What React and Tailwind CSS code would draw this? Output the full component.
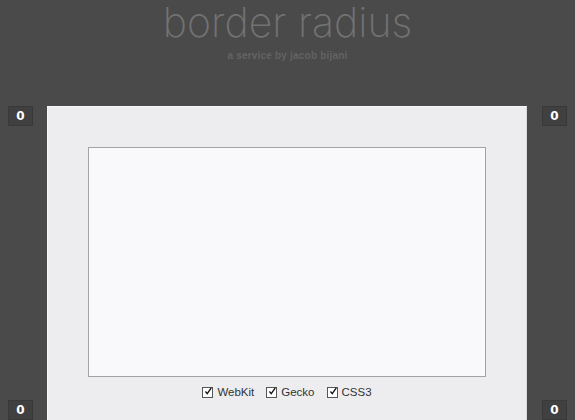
import React from 'react';

const Badge = () => (
  <div className="w-[25px] h-[20px] bg-[#404040] border border-[#393939] flex items-center justify-center text-white text-[12px] font-bold leading-none font-['DejaVu_Sans',sans-serif]">
    0
  </div>
);

const Check = ({ label }) => (
  <label className="flex items-center gap-[4px]">
    <span className="w-[11px] h-[11px] border border-[#555] bg-white flex items-center justify-center">
      <svg viewBox="0 0 11 11" className="w-[11px] h-[11px] -mt-[2px] ml-[1px]">
        <path d="M2 5.5 L4.5 8.5 L10 0.5" fill="none" stroke="#111" strokeWidth="1.8" />
      </svg>
    </span>
    <span>{label}</span>
  </label>
);

export default function App() {
  return (
    <div className="w-[575px] h-[420px] overflow-hidden bg-[#4a4a4a] font-['DejaVu_Sans',sans-serif]">
      {/* Header */}
      <div className="h-[106px] pt-[2px] flex flex-col items-center">
        <h1 className="text-[41px] leading-[40px] font-extralight text-[#727272] font-['Inter',sans-serif]">
          border radius
        </h1>
        <p className="mt-[6px] text-[10px] font-bold text-[#636363] tracking-[0.2px] font-['Liberation_Sans',sans-serif]">a service by jacob bijani</p>
      </div>

      {/* Main row */}
      <div className="flex items-start px-[8px]">
        <div className="h-[314px] flex flex-col justify-between">
          <Badge />
          <Badge />
        </div>

        <div className="ml-[14px] w-[480px] h-[330px] bg-[#ededf0] border border-[#f7f7f8] border-r-[#d8d8dc] p-[40px]">
          <div className="w-[398px] h-[230px] bg-[#f9f9fb] border border-[#a3a3a3]"></div>
          <div className="mt-[7px] flex justify-center gap-[12px] text-[11.5px] text-[#333] font-['Liberation_Sans',sans-serif]">
            <Check label="WebKit" />
            <Check label="Gecko" />
            <Check label="CSS3" />
          </div>
        </div>

        <div className="ml-[15px] h-[314px] flex flex-col justify-between">
          <Badge />
          <Badge />
        </div>
      </div>
    </div>
  );
}
